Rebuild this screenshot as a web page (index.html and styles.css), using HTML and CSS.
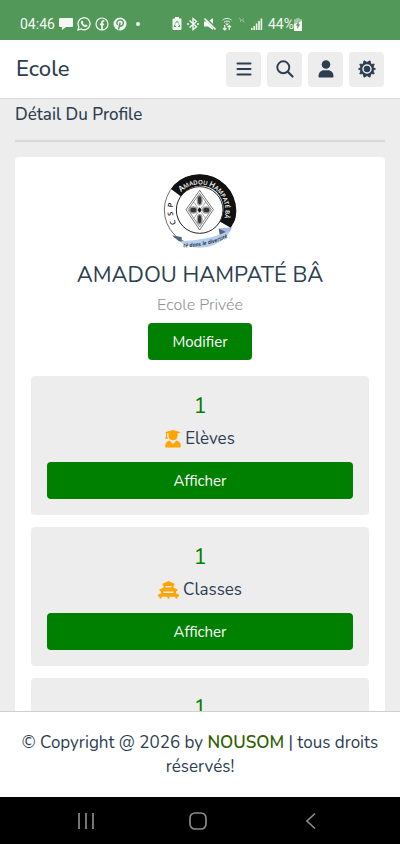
FILE: index.html
```html
<!DOCTYPE html>
<html lang="fr">
<head>
    <meta charset="UTF-8">
    <meta name="viewport" content="width=device-width, initial-scale=1.0">
    <title>Ecole</title>
    <link rel="stylesheet" href="styles.css">
</head>
<body>
    <div class="status-bar">
        <div class="status-left">
            <span>04:46</span>
            <svg width="14" height="14" viewBox="0 0 14 14"><path fill="currentColor" d="M1 1h12a1 1 0 0 1 1 1v7a1 1 0 0 1-1 1H7l-4 3v-3H1a1 1 0 0 1-1-1V2a1 1 0 0 1 1-1z"/></svg>
            <svg width="14" height="14" viewBox="0 0 14 14"><path fill="none" stroke="currentColor" stroke-width="1.3" d="M1 13l.9-3.2A6 6 0 1 1 4.2 12z"/><path fill="currentColor" d="M4.2 4.2c.8-1.4 1.4-.8 2.1 1l-.6.9c.5 1 1.2 1.7 2.3 2.2l.9-.8c1.9.8 2 1.1 1.2 2.1-2.2 1.9-7.400-2.5-5.900-5.400z"/></svg>
            <svg width="14" height="14" viewBox="0 0 14 14"><circle cx="7" cy="7" r="6" fill="none" stroke="currentColor" stroke-width="1.2"/><path fill="none" stroke="currentColor" stroke-width="1.7" d="M7 13V5.5C7 4.2 7.7 3.7 9.3 3.8M4.8 7.3h4.300"/></svg>
            <svg width="14" height="14" viewBox="0 0 14 14"><circle cx="7" cy="7" r="6.5" fill="currentColor"/><path fill="none" stroke="#529859" stroke-width="1.4" d="M5.5 12.5l1.700-7M4.500 8C2.500 5 5 3 7.300 3c3.200 0 3.800 3 2.300 5-1.100 1.400-2.600 1.200-3.100.2"/></svg>
            <span class="dot"></span>
        </div>
        <div class="status-right">
            <svg width="10" height="14" viewBox="0 0 10 14"><path fill="currentColor" d="M3 0h4v1.500h1.500a1 1 0 0 1 1 1V12a1 1 0 0 1-1 1h-7a1 1 0 0 1-1-1V2.500a1 1 0 0 1 1-1H3z"/><path fill="none" stroke="#529859" d="M3.200 6.500L5 4.200l1.800 2.300M7 7.500L7.800 9.500H6M4.200 9.500H2.200L3 7.500"/></svg>
            <svg width="12" height="14" viewBox="0 0 12 14"><path fill="none" stroke="currentColor" stroke-width="1.4" d="M2.500 3.500l7 6.200L6 12.500v-11l3.500 3-7 6"/><path fill="currentColor" d="M0 6.200h2v1.600H0zM10 6.200h2v1.600h-2z"/></svg>
            <svg width="12" height="14" viewBox="0 0 12 14"><path fill="currentColor" d="M0 4.500h4L9 1v12L4 9.500H0z"/><path stroke="#529859" stroke-width="3" d="M1 1l11 11"/><path stroke="currentColor" stroke-width="1.600" d="M.5 1.500l11 11"/></svg>
            <svg width="12" height="14" viewBox="0 0 12 14"><path fill="none" stroke="currentColor" d="M1.500 3.200c2.600-2.300 6.400-2.300 9 0M3 5.300c1.800-1.600 4.200-1.600 6 0"/><path fill="currentColor" d="M4 6.500h4L6 8.500z"/><path fill="none" stroke="currentColor" stroke-width="1.200" d="M3.800 8v5M2 11.300L3.800 13l1.700-1.700M8.200 13V8.500M6.500 10.200l1.700-1.700L10 10.200"/></svg>
            <svg class="no-sim" width="8" height="14" viewBox="0 0 8 14"><path fill="none" stroke="currentColor" d="M1 1l5 4M2.500 5V2.500M6 1L4.500 3l2 2.500"/></svg>
            <svg width="12" height="14" viewBox="0 0 12 14"><path fill="currentColor" d="M0 11h1.600v2H0zM2.400 9H4v4H2.400zM4.800 6.500h1.600V13H4.800zM7.200 4h1.600v9H7.200zM9.600 1.500h1.600V13H9.600z"/></svg>
            <span class="battery">44%<svg width="8" height="13" viewBox="0 0 8 13"><path fill="currentColor" opacity=".5" d="M2.500 0h3v1.300H8V6H0V1.300h2.500z"/><path fill="currentColor" d="M0 6l8-3v10H0z"/><path fill="#529859" d="M5 3L1.800 7.500h1.700L3 11l3.200-4.500H4.500z"/></svg></span>
        </div>
    </div>

    <header class="topbar">
        <h1 class="brand">Ecole</h1>
        <div class="actions">
            <button class="icon-btn" type="button" aria-label="Menu">
                <svg width="16" height="16" viewBox="0 0 16 16"><path stroke="currentColor" stroke-width="1.8" stroke-linecap="round" d="M1.400 2.500h13.200M1.400 8h13.200M1.400 13.500h13.200"/></svg>
            </button>
            <button class="icon-btn" type="button" aria-label="Rechercher">
                <svg width="18" height="18" viewBox="0 0 18 18"><circle cx="7.3" cy="7.3" r="6" fill="none" stroke="currentColor" stroke-width="1.9"/><path stroke="currentColor" stroke-width="2.2" stroke-linecap="round" d="M11.800 11.800l4.700 4.700"/></svg>
            </button>
            <button class="icon-btn" type="button" aria-label="Compte">
                <svg width="16" height="18" viewBox="0 0 16 18"><circle cx="8" cy="4.500" r="4.300" fill="currentColor"/><path fill="currentColor" d="M.5 16.500C.5 12.500 3 10.300 6 10.300h4c3 0 5.500 2.200 5.500 6.200 0 .5-.4 1-1 1h-13c-.6 0-1-.5-1-1z"/></svg>
            </button>
            <button class="icon-btn" type="button" aria-label="Thème">
                <svg width="18" height="18" viewBox="0 0 18 18"><path fill="currentColor" stroke="currentColor" stroke-linejoin="round" d="M9 2.500L12 .8l.6 3.500 3.600-.1-1.300 3.200L17.500 9l-2.600 1.600 1.300 3.200-3.600-.1-.6 3.500-3-1.700-3 1.700-.6-3.500-3.600.1 1.300-3.200L.5 9l2.600-1.600-1.300-3.200 3.600.1L6 .8z"/><circle cx="9" cy="9" r="4" fill="currentColor" stroke="#ededed" stroke-width="1.500"/></svg>
            </button>
        </div>
    </header>

    <main class="content">
        <h2 class="page-title">Détail Du Profile</h2>

        <section class="profile">
            <svg class="logo" width="74" height="76" viewBox="36 24 222 228" role="img" aria-label="CSP Amadou Hampaté Bâ">
                <defs>
                    <clipPath id="round"><circle cx="146" cy="138" r="110"/></clipPath>
                    <path id="arc-name" d="M90 81A78 78 0 0 1 214 173"/>
                    <path id="arc-csp" d="M76 175A80 80 0 0 1 89 78"/>
                    <path id="arc-motto" d="M97 247Q175 246 240 213"/>
                </defs>
                <g clip-path="url(#round)">
                    <circle cx="146" cy="135" r="106" fill="#fff" stroke="#222" stroke-width="2"/>
                    <path fill="#111" d="M60 72A107 107 0 1 1 239 188L205 169A68 68 0 1 0 91 95z"/>
                    <circle cx="146" cy="135" r="70" fill="#fff" stroke="#222" stroke-width="3"/>
                    <path fill="none" stroke="#333" stroke-width="2" d="M146 76l41 58-41 61-41-61z"/>
                    <path fill="none" stroke="#555" stroke-width="2" d="M146 85l35 49-35 52-35-52z"/>
                    <path stroke="#777" stroke-width="2" d="M128 111l36 49M164 111l-36 49"/>
                    <g fill="#333" stroke="#999" stroke-width="4">
                        <ellipse cx="146" cy="106" rx="7" ry="14"/>
                        <ellipse cx="146" cy="163" rx="7" ry="14"/>
                        <ellipse cx="127" cy="135" rx="11" ry="9"/>
                        <ellipse cx="166" cy="135" rx="11" ry="9"/>
                    </g>
                    <path fill="#111" d="M146 127l6 8-6 8-6-8z"/>
                    <path fill="#9dbce8" d="M36 212q22 4 38-2l-8 23q12 11 30 16l4-1 158-26v-36l-51 4q8 8 18 12-70 32-133 27l-4 30-42-20z"/>
                    <path fill="#b5cef0" d="M91 229q80-3 134-28l33-8v28q-75 33-160 31z"/>
                    <path fill="#52647d" d="M51 210l41 6v14q-14-1-24-9zM203 190l22 11-19 8z"/>
                </g>
                <text class="logo-name"><textPath href="#arc-name"><tspan class="cap">A</tspan>MADOU <tspan class="cap">H</tspan>AMPATÉ BÂ</textPath></text>
                <text class="logo-csp"><textPath href="#arc-csp">C&#160;&#160;S&#160;&#160;P</textPath></text>
                <text class="logo-motto"><textPath href="#arc-motto">té dans le diversité</textPath></text>
            </svg>
            <h3 class="name">AMADOU HAMPATÉ BÂ</h3>
            <p class="kind">Ecole Privée</p>
            <button class="btn btn-edit" type="button">Modifier</button>

            <article class="stat">
                <p class="count">1</p>
                <p class="label">
                    <svg width="16" height="18" viewBox="0 0 16 18"><path fill="orange" d="M0 2.200L8 0l8 2.200-3.500 1.200v2.300c0 6-9 6-9 0V3.400L2 3v3l.8 3H.3L1 6V2.700zM.3 17.500v-2.200c0-2.500 1.700-4 4.200-4.800L8 14l3.500-3.500c2.500.8 4.200 2.300 4.200 4.800v2.200z"/></svg>
                    Elèves
                </p>
                <button class="btn" type="button">Afficher</button>
            </article>

            <article class="stat">
                <p class="count">1</p>
                <p class="label">
                    <svg width="21" height="18" viewBox="0 0 21 18"><path fill="orange" fill-rule="evenodd" d="M10.500 0l6 2.800v1.400l-1 .6v2l4 1.400v1.400l-1.500.8v2l3 1.200v1.800l-1.500.4v1.700h-2v-1.700h-6v1.700h-2v-1.700h-6v1.700h-2v-1.700L0 15.400v-1.800l3-1.200v-2l-1.500-.8V8.200l4-1.400v-2l-1-.6V2.800zM7.500 5v1.600h6V5zM5.500 10.400v1.700h10v-1.700z"/></svg>
                    Classes
                </p>
                <button class="btn" type="button">Afficher</button>
            </article>

            <article class="stat">
                <p class="count">1</p>
            </article>
        </section>
    </main>

    <footer class="footer">
        © Copyright @ 2026 by <a href="#">NOUSOM</a> | tous droits réservés!
    </footer>

    <nav class="nav-bar">
        <button type="button" aria-label="Applications récentes">
            <svg width="18" height="18" viewBox="0 0 18 18"><path stroke="currentColor" stroke-width="1.7" d="M2 1v16M9 1v16M16 1v16"/></svg>
        </button>
        <button type="button" aria-label="Accueil">
            <svg width="18" height="18" viewBox="0 0 18 18"><rect x="1" y="1" width="16" height="16" rx="5" fill="none" stroke="currentColor" stroke-width="1.7"/></svg>
        </button>
        <button type="button" aria-label="Retour">
            <svg width="18" height="18" viewBox="0 0 18 18"><path fill="none" stroke="currentColor" stroke-width="1.7" d="M13 1.500L5 9l8 7.500"/></svg>
        </button>
    </nav>
</body>
</html>
```
FILE: styles.css
```css
:root {
    --primary: #008000;
    --text: #2c3e50;
    --grey: #ededed;
    --muted: #919191;
}

* {
    box-sizing: border-box;
}

body {
    display: flex;
    flex-direction: column;
    height: 100vh;
    margin: 0;
    background: var(--grey);
    color: var(--text);
    font-family: Nunito, Lato, sans-serif;
    font-size: 17px;
    line-height: 24px;
}

h1, h2, h3, p {
    margin: 0;
    font-weight: 400;
}

svg {
    flex: none;
}

button {
    border: none;
    padding: 0;
    font-family: inherit;
    cursor: pointer;
}

.status-bar {
    display: flex;
    flex: none;
    align-items: center;
    justify-content: space-between;
    height: 40px;
    padding: 8px 98px 0 20px;
    background: #529859;
    color: #f3f8f3;
    font: 14px/20px Roboto, sans-serif;
}

.status-left,
.status-right {
    display: flex;
    align-items: center;
    gap: 4px;
}

.status-right {
    gap: 5px;
}

.battery {
    display: flex;
    align-items: center;
}

.dot {
    width: 4px;
    height: 4px;
    margin-left: 5px;
    border-radius: 50%;
    background: currentColor;
}

.no-sim {
    opacity: 0.4;
}

.topbar {
    display: flex;
    flex: none;
    align-items: center;
    justify-content: space-between;
    height: 59px;
    padding: 0 16px;
    background: #fff;
    border-bottom: 1px solid #dcdcdc;
}

.brand {
    font-size: 22px;
    font-weight: 500;
}

.actions {
    display: flex;
    gap: 6px;
}

.icon-btn {
    display: flex;
    align-items: center;
    justify-content: center;
    width: 35px;
    height: 35px;
    border-radius: 4px;
    background: var(--grey);
    color: var(--text);
}

.content {
    flex: 1;
    min-height: 0;
    overflow: auto;
    padding: 4px 15px 0;
    scrollbar-width: none;
}

.page-title {
    padding-bottom: 13px;
    border-bottom: 2px solid #d8d8d8;
    font-size: 17px;
    font-weight: 500;
    line-height: 24px;
}

.profile {
    display: flex;
    flex-direction: column;
    align-items: center;
    margin-top: 15px;
    padding: 16px;
    border-radius: 4px;
    background: #fff;
}

.name {
    margin-top: 12px;
    font-size: 22px;
    line-height: 28px;
}

.kind {
    margin: 4px 0 6px;
    color: var(--muted);
    font-size: 16px;
    font-weight: 300;
}

.btn {
    width: 100%;
    height: 37px;
    border-radius: 4px;
    background: var(--primary);
    color: #fff;
    font-size: 15px;
}

.btn-edit {
    width: auto;
    padding: 0 24px;
    margin-bottom: 4px;
}

.stat {
    align-self: stretch;
    margin-top: 12px;
    padding: 16px;
    border-radius: 4px;
    background: var(--grey);
    text-align: center;
}

.count {
    color: var(--primary);
    font-size: 22px;
    line-height: 28px;
}

.label {
    display: flex;
    align-items: center;
    justify-content: center;
    gap: 4px;
    margin: 7px 0 11px;
}

.footer {
    flex: none;
    padding: 19px 16px 18px;
    background: #fff;
    border-top: 1px solid #d0d0d0;
    text-align: center;
}

.footer a {
    color: #306000;
    font-weight: 600;
    text-decoration: none;
}

.nav-bar {
    display: flex;
    flex: none;
    align-items: center;
    justify-content: space-around;
    height: 47px;
    padding: 0 33px 0 30px;
    background: #000;
}

.nav-bar button {
    display: flex;
    background: none;
    color: #8a8a8a;
}

.logo text {
    font-family: "Open Sans", sans-serif;
    font-weight: 600;
}

.logo .logo-name {
    fill: #fff;
    font-size: 18px;
}

.logo .cap {
    font-size: 23px;
}

.logo .logo-csp {
    fill: #111;
    font-size: 22px;
}

.logo .logo-motto {
    fill: #222;
    font-size: 16px;
    font-style: italic;
}
```
